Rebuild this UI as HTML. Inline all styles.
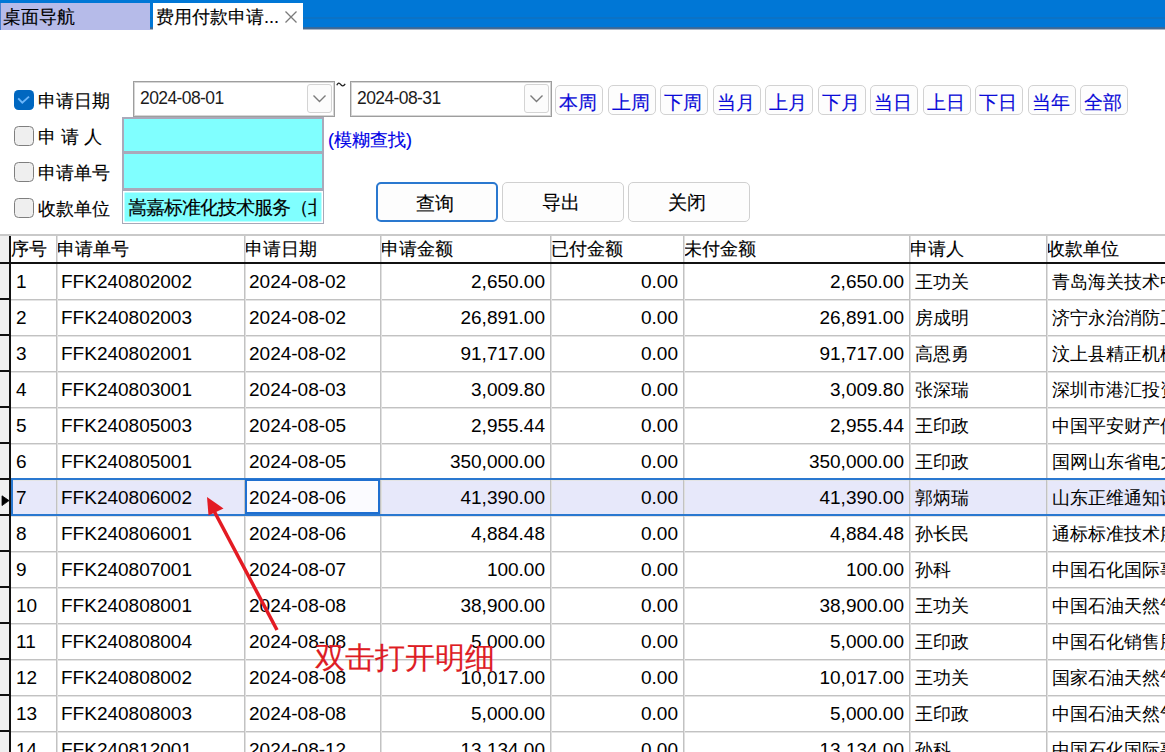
<!DOCTYPE html><html><head><meta charset="utf-8"><style>
*{box-sizing:border-box;margin:0;padding:0}
html,body{width:1165px;height:752px;overflow:hidden;background:#fff}
body{position:relative;font-family:"Liberation Sans",sans-serif;color:#000}
.k{-webkit-text-stroke:0.15px currentColor}
.a{position:absolute}
.t{position:absolute;white-space:nowrap}
.bar{left:0;top:0;width:1165px;height:30px;background:linear-gradient(#0077d6 0,#0077d6 17px,#0a72c6 17px,#0a72c6 19px,#0077d6 19px,#0077d6 27px,#2a6aa6 27px,#4a6a8e 29px,#a8b4c4 29px,#a8b4c4 30px)}
.bar2{display:none}
.tab1{left:0;top:3px;width:150px;height:27px;background:#b6bbe9;border-left:1px solid #4a7fd0}
.tab2{left:153px;top:3px;width:150px;height:27px;background:#fff}
.cb{width:19.5px;height:19.5px;border-radius:4.5px;left:14px}
.cbon{background:#0067c0}
.cboff{background:#efefef;border:1.7px solid #7f7f7f}
.lbl{font-size:18px;line-height:20px;left:38px}
.combo{top:81px;height:36px;border:1px solid #9e9e9e;box-shadow:inset 0 0 0 1px #d6d6d6;background:#fff}
.dd{position:absolute;top:2px;right:2px;width:25px;height:29px;border:1px solid #d4d4d4;border-radius:3px;background:#fcfcfc}
.ctext{color:#1c1c1c;font-size:17.5px;letter-spacing:-0.6px;line-height:20px;top:6px;left:6px}
.qb{top:84.5px;width:48px;height:30.5px;border:1.5px solid #d2d2d2;border-radius:5px;background:#fdfdfd;color:#0a0ad8;font-size:18.5px;line-height:28px;padding-top:3px;padding-right:2px;text-align:center}
.cy{left:122px;width:202px;background:#80ffff;border:2px solid #aaa9ba}
.btn{top:182px;width:122px;height:40px;border:1.5px solid #d0d0d0;border-radius:5px;background:#fdfdfd;font-size:19px;line-height:39px;padding-right:4px;text-align:center}
.cell{position:absolute;font-size:19px;line-height:37px;height:36px;white-space:nowrap;overflow:hidden}
.hd{position:absolute;font-size:18px;line-height:28px;top:235px;height:28px;white-space:nowrap;overflow:hidden}
</style></head><body>
<div class="a bar"></div><div class="a bar2"></div>
<div class="a tab1"></div><div class="a tab2"></div>
<div class="t k" style="left:3px;top:7px;font-size:18px;line-height:20px">桌面导航</div>
<div class="t k" style="left:156px;top:7px;font-size:18px;line-height:20px">费用付款申请...</div>
<svg class="a" style="left:284px;top:10px" width="14" height="14" viewBox="0 0 14 14"><path d="M1.5 1.5L12.5 12.5M12.5 1.5L1.5 12.5" stroke="#7a7a7a" stroke-width="1.3" fill="none"/></svg>
<div class="a cb cbon" style="top:90px"><svg class="a" style="left:0;top:0" width="19" height="19" viewBox="0 0 19 19"><path d="M4.2 8.4L8.3 12.6L15 6.6" stroke="#6cb6fa" stroke-width="1.9" fill="none"/></svg></div>
<div class="a cb cboff" style="top:126px"></div>
<div class="a cb cboff" style="top:162px"></div>
<div class="a cb cboff" style="top:198px"></div>
<div class="t lbl k" style="top:91px">申请日期</div>
<div class="t lbl k" style="top:127px">申 请 人</div>
<div class="t lbl k" style="top:163px">申请单号</div>
<div class="t lbl k" style="top:199px">收款单位</div>
<div class="a combo" style="left:133px;width:202px"><div class="t ctext">2024-08-01</div><div class="dd"><svg class="a" style="left:4px;top:8.5px" width="15" height="9" viewBox="0 0 15 9"><path d="M1.5 1.5L7.5 7.5L13.5 1.5" stroke="#7b7b7b" stroke-width="1.4" fill="none"/></svg></div></div>
<svg class="a" style="left:334px;top:79px" width="14" height="10" viewBox="334 79 14 10"><path d="M336.8 85.2Q338.6 81.4 340.6 84.4Q342.6 87.6 345.2 83.8" stroke="#222" stroke-width="1.3" fill="none"/></svg>
<div class="a combo" style="left:350px;width:202px"><div class="t ctext">2024-08-31</div><div class="dd"><svg class="a" style="left:4px;top:8.5px" width="15" height="9" viewBox="0 0 15 9"><path d="M1.5 1.5L7.5 7.5L13.5 1.5" stroke="#7b7b7b" stroke-width="1.4" fill="none"/></svg></div></div>
<div class="a qb k" style="left:555.0px">本周</div>
<div class="a qb k" style="left:607.5px">上周</div>
<div class="a qb k" style="left:660.0px">下周</div>
<div class="a qb k" style="left:712.5px">当月</div>
<div class="a qb k" style="left:765.0px">上月</div>
<div class="a qb k" style="left:817.5px">下月</div>
<div class="a qb k" style="left:870.0px">当日</div>
<div class="a qb k" style="left:922.5px">上日</div>
<div class="a qb k" style="left:975.0px">下日</div>
<div class="a qb k" style="left:1027.5px">当年</div>
<div class="a qb k" style="left:1080.0px">全部</div>
<div class="a cy" style="top:117px;height:36px"></div>
<div class="a cy" style="top:152px;height:38px"></div>
<div class="a cy" style="top:190px;height:34px;border:1px solid #a8a8b8;box-shadow:inset 0 0 0 1.5px #fff;overflow:hidden"><div class="a" style="left:0;top:0;width:194px;height:32px;overflow:hidden"><div class="t k" style="left:5px;top:6px;font-size:19px;letter-spacing:-1px;line-height:21px">嵩嘉标准化技术服务（北</div></div></div>
<div class="t k" style="left:328px;top:130px;font-size:18px;line-height:20px;color:#0000e6">(模糊查找)</div>
<div class="a btn k" style="left:376px;border:2px solid #2a78cf">查询</div>
<div class="a btn k" style="left:502px">导出</div>
<div class="a btn k" style="left:628px">关闭</div>
<div class="a" style="left:0;top:234px;width:1165px;height:2px;background:#c9c9c9"></div>
<div class="a" style="left:0;top:236px;width:9px;height:516px;background:#efefef"></div>
<div class="hd k" style="left:11px;width:45px">序号</div>
<div class="hd k" style="left:57px;width:187px">申请单号</div>
<div class="hd k" style="left:245px;width:135px">申请日期</div>
<div class="hd k" style="left:381px;width:169px">申请金额</div>
<div class="hd k" style="left:551px;width:132px">已付金额</div>
<div class="hd k" style="left:684px;width:225px">未付金额</div>
<div class="hd k" style="left:910px;width:136px">申请人</div>
<div class="hd k" style="left:1047px;width:253px">收款单位</div>
<div class="a" style="left:11px;top:479px;width:1154px;height:36px;background:#e7e8fa"></div>
<div class="a" style="left:11px;top:299px;width:1154px;height:1px;background:#c2c2c2"></div>
<div class="a" style="left:11px;top:300px;width:1154px;height:1px;background:#e4e4e4"></div>
<div class="a" style="left:0;top:298px;width:10px;height:2px;background:#111"></div>
<div class="a" style="left:11px;top:335px;width:1154px;height:1px;background:#c2c2c2"></div>
<div class="a" style="left:11px;top:336px;width:1154px;height:1px;background:#e4e4e4"></div>
<div class="a" style="left:0;top:334px;width:10px;height:2px;background:#111"></div>
<div class="a" style="left:11px;top:371px;width:1154px;height:1px;background:#c2c2c2"></div>
<div class="a" style="left:11px;top:372px;width:1154px;height:1px;background:#e4e4e4"></div>
<div class="a" style="left:0;top:370px;width:10px;height:2px;background:#111"></div>
<div class="a" style="left:11px;top:407px;width:1154px;height:1px;background:#c2c2c2"></div>
<div class="a" style="left:11px;top:408px;width:1154px;height:1px;background:#e4e4e4"></div>
<div class="a" style="left:0;top:406px;width:10px;height:2px;background:#111"></div>
<div class="a" style="left:11px;top:443px;width:1154px;height:1px;background:#c2c2c2"></div>
<div class="a" style="left:11px;top:444px;width:1154px;height:1px;background:#e4e4e4"></div>
<div class="a" style="left:0;top:442px;width:10px;height:2px;background:#111"></div>
<div class="a" style="left:11px;top:479px;width:1154px;height:1px;background:#c2c2c2"></div>
<div class="a" style="left:11px;top:480px;width:1154px;height:1px;background:#e4e4e4"></div>
<div class="a" style="left:0;top:478px;width:10px;height:2px;background:#111"></div>
<div class="a" style="left:11px;top:515px;width:1154px;height:1px;background:#c2c2c2"></div>
<div class="a" style="left:11px;top:516px;width:1154px;height:1px;background:#e4e4e4"></div>
<div class="a" style="left:0;top:514px;width:10px;height:2px;background:#111"></div>
<div class="a" style="left:11px;top:551px;width:1154px;height:1px;background:#c2c2c2"></div>
<div class="a" style="left:11px;top:552px;width:1154px;height:1px;background:#e4e4e4"></div>
<div class="a" style="left:0;top:550px;width:10px;height:2px;background:#111"></div>
<div class="a" style="left:11px;top:587px;width:1154px;height:1px;background:#c2c2c2"></div>
<div class="a" style="left:11px;top:588px;width:1154px;height:1px;background:#e4e4e4"></div>
<div class="a" style="left:0;top:586px;width:10px;height:2px;background:#111"></div>
<div class="a" style="left:11px;top:623px;width:1154px;height:1px;background:#c2c2c2"></div>
<div class="a" style="left:11px;top:624px;width:1154px;height:1px;background:#e4e4e4"></div>
<div class="a" style="left:0;top:622px;width:10px;height:2px;background:#111"></div>
<div class="a" style="left:11px;top:659px;width:1154px;height:1px;background:#c2c2c2"></div>
<div class="a" style="left:11px;top:660px;width:1154px;height:1px;background:#e4e4e4"></div>
<div class="a" style="left:0;top:658px;width:10px;height:2px;background:#111"></div>
<div class="a" style="left:11px;top:695px;width:1154px;height:1px;background:#c2c2c2"></div>
<div class="a" style="left:11px;top:696px;width:1154px;height:1px;background:#e4e4e4"></div>
<div class="a" style="left:0;top:694px;width:10px;height:2px;background:#111"></div>
<div class="a" style="left:11px;top:731px;width:1154px;height:1px;background:#c2c2c2"></div>
<div class="a" style="left:11px;top:732px;width:1154px;height:1px;background:#e4e4e4"></div>
<div class="a" style="left:0;top:730px;width:10px;height:2px;background:#111"></div>
<div class="a" style="left:11px;top:767px;width:1154px;height:1px;background:#c2c2c2"></div>
<div class="a" style="left:11px;top:768px;width:1154px;height:1px;background:#e4e4e4"></div>
<div class="a" style="left:0;top:766px;width:10px;height:2px;background:#111"></div>
<div class="a" style="left:56px;top:236px;width:1px;height:516px;background:#c2c2c2"></div>
<div class="a" style="left:57px;top:236px;width:1px;height:516px;background:#e0e0e0"></div>
<div class="a" style="left:244px;top:236px;width:1px;height:516px;background:#c2c2c2"></div>
<div class="a" style="left:245px;top:236px;width:1px;height:516px;background:#e0e0e0"></div>
<div class="a" style="left:380px;top:236px;width:1px;height:516px;background:#c2c2c2"></div>
<div class="a" style="left:381px;top:236px;width:1px;height:516px;background:#e0e0e0"></div>
<div class="a" style="left:550px;top:236px;width:1px;height:516px;background:#c2c2c2"></div>
<div class="a" style="left:551px;top:236px;width:1px;height:516px;background:#e0e0e0"></div>
<div class="a" style="left:683px;top:236px;width:1px;height:516px;background:#c2c2c2"></div>
<div class="a" style="left:684px;top:236px;width:1px;height:516px;background:#e0e0e0"></div>
<div class="a" style="left:909px;top:236px;width:1px;height:516px;background:#c2c2c2"></div>
<div class="a" style="left:910px;top:236px;width:1px;height:516px;background:#e0e0e0"></div>
<div class="a" style="left:1046px;top:236px;width:1px;height:516px;background:#c2c2c2"></div>
<div class="a" style="left:1047px;top:236px;width:1px;height:516px;background:#e0e0e0"></div>
<div class="a" style="left:9px;top:236px;width:2px;height:516px;background:#111"></div>
<div class="a" style="left:0;top:262px;width:1165px;height:2px;background:#111"></div>
<div class="cell" style="left:12px;top:263px;width:44px;padding-left:4px">1</div>
<div class="cell" style="left:58px;top:263px;width:186px;padding-left:3px">FFK240802002</div>
<div class="cell" style="left:246px;top:263px;width:134px;padding-left:3px">2024-08-02</div>
<div class="cell" style="left:382px;top:263px;width:168px;padding-right:5px;text-align:right">2,650.00</div>
<div class="cell" style="left:552px;top:263px;width:131px;padding-right:5px;text-align:right">0.00</div>
<div class="cell" style="left:685px;top:263px;width:224px;padding-right:5px;text-align:right">2,650.00</div>
<div class="cell" style="left:911px;top:263px;width:135px;padding-left:4px;font-size:18px;line-height:39px;height:35px">王功关</div>
<div class="cell" style="left:1048px;top:263px;width:252px;padding-left:4px;font-size:18px;line-height:39px;height:35px">青岛海关技术中心</div>
<div class="cell" style="left:12px;top:299px;width:44px;padding-left:4px">2</div>
<div class="cell" style="left:58px;top:299px;width:186px;padding-left:3px">FFK240802003</div>
<div class="cell" style="left:246px;top:299px;width:134px;padding-left:3px">2024-08-02</div>
<div class="cell" style="left:382px;top:299px;width:168px;padding-right:5px;text-align:right">26,891.00</div>
<div class="cell" style="left:552px;top:299px;width:131px;padding-right:5px;text-align:right">0.00</div>
<div class="cell" style="left:685px;top:299px;width:224px;padding-right:5px;text-align:right">26,891.00</div>
<div class="cell" style="left:911px;top:299px;width:135px;padding-left:4px;font-size:18px;line-height:39px;height:35px">房成明</div>
<div class="cell" style="left:1048px;top:299px;width:252px;padding-left:4px;font-size:18px;line-height:39px;height:35px">济宁永治消防工程</div>
<div class="cell" style="left:12px;top:335px;width:44px;padding-left:4px">3</div>
<div class="cell" style="left:58px;top:335px;width:186px;padding-left:3px">FFK240802001</div>
<div class="cell" style="left:246px;top:335px;width:134px;padding-left:3px">2024-08-02</div>
<div class="cell" style="left:382px;top:335px;width:168px;padding-right:5px;text-align:right">91,717.00</div>
<div class="cell" style="left:552px;top:335px;width:131px;padding-right:5px;text-align:right">0.00</div>
<div class="cell" style="left:685px;top:335px;width:224px;padding-right:5px;text-align:right">91,717.00</div>
<div class="cell" style="left:911px;top:335px;width:135px;padding-left:4px;font-size:18px;line-height:39px;height:35px">高恩勇</div>
<div class="cell" style="left:1048px;top:335px;width:252px;padding-left:4px;font-size:18px;line-height:39px;height:35px">汶上县精正机械</div>
<div class="cell" style="left:12px;top:371px;width:44px;padding-left:4px">4</div>
<div class="cell" style="left:58px;top:371px;width:186px;padding-left:3px">FFK240803001</div>
<div class="cell" style="left:246px;top:371px;width:134px;padding-left:3px">2024-08-03</div>
<div class="cell" style="left:382px;top:371px;width:168px;padding-right:5px;text-align:right">3,009.80</div>
<div class="cell" style="left:552px;top:371px;width:131px;padding-right:5px;text-align:right">0.00</div>
<div class="cell" style="left:685px;top:371px;width:224px;padding-right:5px;text-align:right">3,009.80</div>
<div class="cell" style="left:911px;top:371px;width:135px;padding-left:4px;font-size:18px;line-height:39px;height:35px">张深瑞</div>
<div class="cell" style="left:1048px;top:371px;width:252px;padding-left:4px;font-size:18px;line-height:39px;height:35px">深圳市港汇投资</div>
<div class="cell" style="left:12px;top:407px;width:44px;padding-left:4px">5</div>
<div class="cell" style="left:58px;top:407px;width:186px;padding-left:3px">FFK240805003</div>
<div class="cell" style="left:246px;top:407px;width:134px;padding-left:3px">2024-08-05</div>
<div class="cell" style="left:382px;top:407px;width:168px;padding-right:5px;text-align:right">2,955.44</div>
<div class="cell" style="left:552px;top:407px;width:131px;padding-right:5px;text-align:right">0.00</div>
<div class="cell" style="left:685px;top:407px;width:224px;padding-right:5px;text-align:right">2,955.44</div>
<div class="cell" style="left:911px;top:407px;width:135px;padding-left:4px;font-size:18px;line-height:39px;height:35px">王印政</div>
<div class="cell" style="left:1048px;top:407px;width:252px;padding-left:4px;font-size:18px;line-height:39px;height:35px">中国平安财产保险</div>
<div class="cell" style="left:12px;top:443px;width:44px;padding-left:4px">6</div>
<div class="cell" style="left:58px;top:443px;width:186px;padding-left:3px">FFK240805001</div>
<div class="cell" style="left:246px;top:443px;width:134px;padding-left:3px">2024-08-05</div>
<div class="cell" style="left:382px;top:443px;width:168px;padding-right:5px;text-align:right">350,000.00</div>
<div class="cell" style="left:552px;top:443px;width:131px;padding-right:5px;text-align:right">0.00</div>
<div class="cell" style="left:685px;top:443px;width:224px;padding-right:5px;text-align:right">350,000.00</div>
<div class="cell" style="left:911px;top:443px;width:135px;padding-left:4px;font-size:18px;line-height:39px;height:35px">王印政</div>
<div class="cell" style="left:1048px;top:443px;width:252px;padding-left:4px;font-size:18px;line-height:39px;height:35px">国网山东省电力</div>
<div class="cell" style="left:12px;top:479px;width:44px;padding-left:4px">7</div>
<div class="cell" style="left:58px;top:479px;width:186px;padding-left:3px">FFK240806002</div>
<div class="cell" style="left:246px;top:479px;width:134px;padding-left:3px">2024-08-06</div>
<div class="cell" style="left:382px;top:479px;width:168px;padding-right:5px;text-align:right">41,390.00</div>
<div class="cell" style="left:552px;top:479px;width:131px;padding-right:5px;text-align:right">0.00</div>
<div class="cell" style="left:685px;top:479px;width:224px;padding-right:5px;text-align:right">41,390.00</div>
<div class="cell" style="left:911px;top:479px;width:135px;padding-left:4px;font-size:18px;line-height:39px;height:35px">郭炳瑞</div>
<div class="cell" style="left:1048px;top:479px;width:252px;padding-left:4px;font-size:18px;line-height:39px;height:35px">山东正维通知识</div>
<div class="cell" style="left:12px;top:515px;width:44px;padding-left:4px">8</div>
<div class="cell" style="left:58px;top:515px;width:186px;padding-left:3px">FFK240806001</div>
<div class="cell" style="left:246px;top:515px;width:134px;padding-left:3px">2024-08-06</div>
<div class="cell" style="left:382px;top:515px;width:168px;padding-right:5px;text-align:right">4,884.48</div>
<div class="cell" style="left:552px;top:515px;width:131px;padding-right:5px;text-align:right">0.00</div>
<div class="cell" style="left:685px;top:515px;width:224px;padding-right:5px;text-align:right">4,884.48</div>
<div class="cell" style="left:911px;top:515px;width:135px;padding-left:4px;font-size:18px;line-height:39px;height:35px">孙长民</div>
<div class="cell" style="left:1048px;top:515px;width:252px;padding-left:4px;font-size:18px;line-height:39px;height:35px">通标标准技术服务</div>
<div class="cell" style="left:12px;top:551px;width:44px;padding-left:4px">9</div>
<div class="cell" style="left:58px;top:551px;width:186px;padding-left:3px">FFK240807001</div>
<div class="cell" style="left:246px;top:551px;width:134px;padding-left:3px">2024-08-07</div>
<div class="cell" style="left:382px;top:551px;width:168px;padding-right:5px;text-align:right">100.00</div>
<div class="cell" style="left:552px;top:551px;width:131px;padding-right:5px;text-align:right">0.00</div>
<div class="cell" style="left:685px;top:551px;width:224px;padding-right:5px;text-align:right">100.00</div>
<div class="cell" style="left:911px;top:551px;width:135px;padding-left:4px;font-size:18px;line-height:39px;height:35px">孙科</div>
<div class="cell" style="left:1048px;top:551px;width:252px;padding-left:4px;font-size:18px;line-height:39px;height:35px">中国石化国际事业</div>
<div class="cell" style="left:12px;top:587px;width:44px;padding-left:4px">10</div>
<div class="cell" style="left:58px;top:587px;width:186px;padding-left:3px">FFK240808001</div>
<div class="cell" style="left:246px;top:587px;width:134px;padding-left:3px">2024-08-08</div>
<div class="cell" style="left:382px;top:587px;width:168px;padding-right:5px;text-align:right">38,900.00</div>
<div class="cell" style="left:552px;top:587px;width:131px;padding-right:5px;text-align:right">0.00</div>
<div class="cell" style="left:685px;top:587px;width:224px;padding-right:5px;text-align:right">38,900.00</div>
<div class="cell" style="left:911px;top:587px;width:135px;padding-left:4px;font-size:18px;line-height:39px;height:35px">王功关</div>
<div class="cell" style="left:1048px;top:587px;width:252px;padding-left:4px;font-size:18px;line-height:39px;height:35px">中国石油天然气</div>
<div class="cell" style="left:12px;top:623px;width:44px;padding-left:4px">11</div>
<div class="cell" style="left:58px;top:623px;width:186px;padding-left:3px">FFK240808004</div>
<div class="cell" style="left:246px;top:623px;width:134px;padding-left:3px">2024-08-08</div>
<div class="cell" style="left:382px;top:623px;width:168px;padding-right:5px;text-align:right">5,000.00</div>
<div class="cell" style="left:552px;top:623px;width:131px;padding-right:5px;text-align:right">0.00</div>
<div class="cell" style="left:685px;top:623px;width:224px;padding-right:5px;text-align:right">5,000.00</div>
<div class="cell" style="left:911px;top:623px;width:135px;padding-left:4px;font-size:18px;line-height:39px;height:35px">王印政</div>
<div class="cell" style="left:1048px;top:623px;width:252px;padding-left:4px;font-size:18px;line-height:39px;height:35px">中国石化销售股份</div>
<div class="cell" style="left:12px;top:659px;width:44px;padding-left:4px">12</div>
<div class="cell" style="left:58px;top:659px;width:186px;padding-left:3px">FFK240808002</div>
<div class="cell" style="left:246px;top:659px;width:134px;padding-left:3px">2024-08-08</div>
<div class="cell" style="left:382px;top:659px;width:168px;padding-right:5px;text-align:right">10,017.00</div>
<div class="cell" style="left:552px;top:659px;width:131px;padding-right:5px;text-align:right">0.00</div>
<div class="cell" style="left:685px;top:659px;width:224px;padding-right:5px;text-align:right">10,017.00</div>
<div class="cell" style="left:911px;top:659px;width:135px;padding-left:4px;font-size:18px;line-height:39px;height:35px">王功关</div>
<div class="cell" style="left:1048px;top:659px;width:252px;padding-left:4px;font-size:18px;line-height:39px;height:35px">国家石油天然气</div>
<div class="cell" style="left:12px;top:695px;width:44px;padding-left:4px">13</div>
<div class="cell" style="left:58px;top:695px;width:186px;padding-left:3px">FFK240808003</div>
<div class="cell" style="left:246px;top:695px;width:134px;padding-left:3px">2024-08-08</div>
<div class="cell" style="left:382px;top:695px;width:168px;padding-right:5px;text-align:right">5,000.00</div>
<div class="cell" style="left:552px;top:695px;width:131px;padding-right:5px;text-align:right">0.00</div>
<div class="cell" style="left:685px;top:695px;width:224px;padding-right:5px;text-align:right">5,000.00</div>
<div class="cell" style="left:911px;top:695px;width:135px;padding-left:4px;font-size:18px;line-height:39px;height:35px">王印政</div>
<div class="cell" style="left:1048px;top:695px;width:252px;padding-left:4px;font-size:18px;line-height:39px;height:35px">中国石油天然气</div>
<div class="cell" style="left:12px;top:731px;width:44px;padding-left:4px">14</div>
<div class="cell" style="left:58px;top:731px;width:186px;padding-left:3px">FFK240812001</div>
<div class="cell" style="left:246px;top:731px;width:134px;padding-left:3px">2024-08-12</div>
<div class="cell" style="left:382px;top:731px;width:168px;padding-right:5px;text-align:right">13,134.00</div>
<div class="cell" style="left:552px;top:731px;width:131px;padding-right:5px;text-align:right">0.00</div>
<div class="cell" style="left:685px;top:731px;width:224px;padding-right:5px;text-align:right">13,134.00</div>
<div class="cell" style="left:911px;top:731px;width:135px;padding-left:4px;font-size:18px;line-height:39px;height:35px">孙科</div>
<div class="cell" style="left:1048px;top:731px;width:252px;padding-left:4px;font-size:18px;line-height:39px;height:35px">中国石化国际事业</div>
<div class="a" style="left:11px;top:478px;width:1154px;height:2px;background:#2a78d0"></div>
<div class="a" style="left:11px;top:514px;width:1154px;height:2px;background:#2a78d0"></div>
<div class="a" style="left:11px;top:479px;width:2px;height:36px;background:#2a78d0"></div>
<div class="a" style="left:245px;top:479px;width:135px;height:35px;border:2px solid #1f6fd0;background:#fbfbff"></div>
<div class="cell" style="left:246px;top:479px;width:134px;padding-left:3px">2024-08-06</div>
<svg class="a" style="left:1px;top:495px" width="9" height="12" viewBox="0 0 9 12"><path d="M1 0.8L8 5.6L1 10.6Z" fill="#000" stroke="#000" stroke-width="0.8" stroke-linejoin="round"/></svg>
<svg class="a" style="left:0;top:0" width="1165" height="752" viewBox="0 0 1165 752"><line x1="277" y1="630" x2="213" y2="509" stroke="#e31b23" stroke-width="3.5"/><path d="M207 497L223.5 508.5L208.5 515.5Z" fill="#e31b23"/></svg>
<div class="t k" style="left:315px;top:641px;font-size:30.3px;line-height:34px;color:#de1c24">双击打开明细</div>
</body></html>
